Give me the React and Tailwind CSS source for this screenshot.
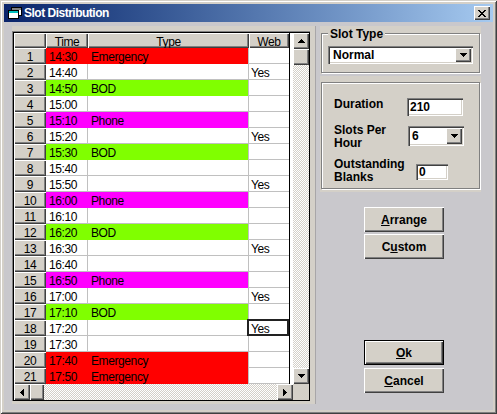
import React from 'react'

const raised = 'bg-[#d4d0c8] shadow-[inset_1px_1px_#ffffff,inset_-1px_-1px_#404040,inset_-2px_-2px_#808080]'
const sunken = 'bg-white shadow-[inset_1px_1px_#808080,inset_2px_2px_#404040,inset_-1px_-1px_#ffffff,inset_-2px_-2px_#d4d0c8]'
const etched = 'border border-[#808080] shadow-[1px_1px_0_#ffffff,inset_1px_1px_0_#ffffff]'
const checker = 'bg-[image:repeating-conic-gradient(#d4d0c8_0_25%,#ffffff_0_50%)] bg-[length:2px_2px]'
const gridFont = "font-['Liberation_Sans',Arial,sans-serif] text-[12px] tracking-[-0.4px] leading-[19px]"

const fills = { r: 'bg-[#ff0000]', g: 'bg-[#80ff00]', m: 'bg-[#ff00ff]' }

const rows = [
  ['14:30', 'Emergency', 'r', ''],
  ['14:40', '', '', 'Yes'],
  ['14:50', 'BOD', 'g', ''],
  ['15:00', '', '', ''],
  ['15:10', 'Phone', 'm', ''],
  ['15:20', '', '', 'Yes'],
  ['15:30', 'BOD', 'g', ''],
  ['15:40', '', '', ''],
  ['15:50', '', '', 'Yes'],
  ['16:00', 'Phone', 'm', ''],
  ['16:10', '', '', ''],
  ['16:20', 'BOD', 'g', ''],
  ['16:30', '', '', 'Yes'],
  ['16:40', '', '', ''],
  ['16:50', 'Phone', 'm', ''],
  ['17:00', '', '', 'Yes'],
  ['17:10', 'BOD', 'g', ''],
  ['17:20', '', '', 'Yes'],
  ['17:30', '', '', ''],
  ['17:40', 'Emergency', 'r', ''],
  ['17:50', 'Emergency', 'r', ''],
]

const arrows = {
  up: { w: 7, h: 4, d: 'M3 0h1v1h1v1h1v1h1v1H0V3h1V2h1V1h1z' },
  down: { w: 7, h: 4, d: 'M0 0h7v1H6v1H5v1H4v1H3V3H2V2H1V1H0z' },
  left: { w: 4, h: 7, d: 'M3 0h1v7H3V6H2V5H1V4H0V3h1V2h1V1h1z' },
  right: { w: 4, h: 7, d: 'M0 0h1v1h1v1h1v1h1v1H3v1H2v1H1v1H0z' },
}

function Arrow({ dir }) {
  const a = arrows[dir]
  return (
    <svg width={a.w} height={a.h} viewBox={`0 0 ${a.w} ${a.h}`} shapeRendering="crispEdges">
      <path d={a.d} fill="#000" />
    </svg>
  )
}

function ScrollButton({ dir }) {
  return (
    <div className={`${raised} w-[16px] h-[16px] flex items-center justify-center`}>
      <Arrow dir={dir} />
    </div>
  )
}

function TitleBar() {
  const x = [
    [0, 0, 2], [6, 0, 2], [1, 1, 2], [5, 1, 2], [2, 2, 4],
    [3, 3, 2], [2, 4, 4], [1, 5, 2], [5, 5, 2], [0, 6, 2], [6, 6, 2],
  ]
  return (
    <div className="h-[18px] flex items-center bg-linear-to-r from-[#0a246a] to-[#a6caf0] pl-[4px] pr-[3px]">
      <svg width="14" height="12" viewBox="0 0 14 12" shapeRendering="crispEdges">
        <rect x="3.5" y="0.5" width="10" height="8" fill="#ffffff" stroke="#000" />
        <rect x="0.5" y="3.5" width="10" height="8" fill="#ffffff" stroke="#000" />
        <rect x="1" y="4" width="9" height="2" fill="#00c0c0" />
        <rect x="4" y="1" width="9" height="2" fill="#808080" />
      </svg>
      <span className="ml-[2px] text-white font-bold text-[12px] tracking-[-0.5px] leading-[14px]">Slot Distribution</span>
      <div className={`${raised} ml-auto w-[16px] h-[14px] flex items-center justify-center`}>
        <svg width="8" height="7" viewBox="0 0 8 7" shapeRendering="crispEdges">
          {x.map(([px, py, w], i) => (
            <rect key={i} x={px} y={py} width={w} height="1" fill="#000" />
          ))}
        </svg>
      </div>
    </div>
  )
}

function Row({ n, time, type, color, web }) {
  const selected = n === 18
  return (
    <div className="flex h-[16px]">
      <div className={`${raised} w-[32px] flex justify-center`}>{n}</div>
      {color ? (
        <div className={`flex w-[203px] border-r border-[#c0c0c0] ${fills[color]}`}>
          <span className="w-[42px] pl-[3px]">{time}</span>
          <span className="pl-[3px]">{type}</span>
        </div>
      ) : (
        <>
          <div className="w-[42px] pl-[3px] border-r border-b border-[#c0c0c0]">{time}</div>
          <div className="w-[161px] border-r border-b border-[#c0c0c0]" />
        </>
      )}
      <div className="relative w-[40px] pl-[2px] border-b border-[#c0c0c0]">
        {web}
        {selected && <div className="absolute left-[-2px] top-[-1px] right-0 bottom-[-1px] border-2 border-[#222222]" />}
      </div>
    </div>
  )
}

function Grid() {
  return (
    <div className="w-[304px] h-[378px] bg-[#d4d0c8] pt-[5px] shadow-[inset_-1px_0_#a8a6a8]">
      <div className="w-[298px] border-t border-l border-[#808080]">
        <div className={`w-[297px] h-[369px] border border-black flex flex-col ${gridFont}`}>
          <div className="flex h-[351px]">
            <div className="w-[279px] flex bg-white">
              <div className="w-[275px]">
                <div className="flex h-[15px]">
                  <div className={`${raised} w-[32px]`} />
                  <div className={`${raised} w-[42px] text-center`}>Time</div>
                  <div className={`${raised} w-[161px] text-center`}>Type</div>
                  <div className={`${raised} w-[40px] text-center`}>Web</div>
                </div>
                {rows.map(([time, type, color, web], i) => (
                  <Row key={i} n={i + 1} time={time} type={type} color={color} web={web} />
                ))}
              </div>
              <div className="w-[4px] border-l border-black" />
            </div>
            <div className="w-[16px] flex flex-col">
              <ScrollButton dir="up" />
              <div className={`${raised} h-[16px]`} />
              <div className={`flex-1 ${checker}`} />
              <ScrollButton dir="down" />
            </div>
          </div>
          <div className="flex h-[16px]">
            <div className="w-[279px] flex">
              <ScrollButton dir="left" />
              <div className={`${raised} w-[14px]`} />
              <div className={`flex-1 ${checker}`} />
              <ScrollButton dir="right" />
            </div>
            <div className="w-[16px] bg-[#d4d0c8]" />
          </div>
        </div>
      </div>
    </div>
  )
}

function DropButton({ className }) {
  return (
    <div className={`${raised} ${className} flex items-center justify-center`}>
      <Arrow dir="down" />
    </div>
  )
}

function Button({ children, isDefault, className }) {
  return (
    <div className={`ml-[44px] w-[80px] h-[25px] ${isDefault ? 'border border-black' : ''} ${className}`}>
      <div className={`${raised} w-full h-full flex items-center justify-center font-bold text-[12px]`}>{children}</div>
    </div>
  )
}

function RightColumn() {
  return (
    <div className="ml-[4px] w-[161px] flex flex-col font-bold text-[12px]">
      <div className="h-[48px] bg-[#d4d0c8] pt-[7px] px-[1px]">
        <div className={`h-[40px] flex flex-col ${etched}`}>
          <span className="-mt-[7px] ml-[6px] self-start px-[2px] bg-[#d4d0c8] leading-[14px]">Slot Type</span>
          <div className={`${sunken} mt-[5px] ml-[6px] w-[145px] h-[18px] flex items-center pl-[5px]`}>
            Normal
            <DropButton className="ml-auto mr-[2px] w-[16px] h-[14px]" />
          </div>
        </div>
      </div>
      <div className="mt-[2px] h-[116px] bg-[#d4d0c8] pt-[6px] px-[1px]">
        <div className={`h-[107px] pt-[14px] pl-[12px] leading-[13px] ${etched}`}>
          <div className="flex h-[19px]">
            <span className="w-[73px] mt-[1px]">Duration</span>
            <div className={`${sunken} mt-[1px] w-[56px] h-[18px] flex items-center pl-[3px]`}>210</div>
          </div>
          <div className="flex mt-[8px] h-[26px]">
            <span className="w-[74px]">Slots Per<br />Hour</span>
            <div className={`${sunken} mt-[2px] w-[56px] h-[20px] flex items-center pl-[4px]`}>
              6
              <DropButton className="ml-auto mr-[2px] w-[16px] h-[16px]" />
            </div>
          </div>
          <div className="flex mt-[8px]">
            <span className="w-[82px]">Outstanding<br />Blanks</span>
            <div className={`${sunken} mt-[6px] w-[32px] h-[16px] flex items-center pl-[3px]`}>0</div>
          </div>
        </div>
      </div>
      <Button className="mt-[15px]"><span className="underline">A</span>rrange</Button>
      <Button className="mt-[2px]">C<span className="underline">u</span>stom</Button>
      <Button isDefault className="mt-[81px]"><span className="underline">O</span>k</Button>
      <Button className="mt-[3px]"><span className="underline">C</span>ancel</Button>
    </div>
  )
}

export default function App() {
  return (
    <div className="w-[497px] h-[414px] bg-[#d4d0c8] p-[4px] flex flex-col font-['Liberation_Sans',Arial,sans-serif] text-black shadow-[inset_1px_1px_#d4d0c8,inset_-1px_-1px_#404040,inset_2px_2px_#ffffff,inset_-2px_-2px_#808080]">
      <TitleBar />
      <div className="flex-1 flex bg-[#c9c8cc] pt-[4px] pl-[8px]">
        <Grid />
        <RightColumn />
      </div>
    </div>
  )
}
